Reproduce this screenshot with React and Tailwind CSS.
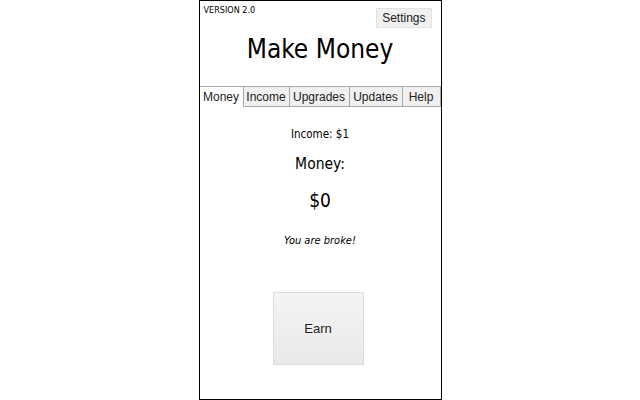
import React, { useState } from "react";

const tabs = [
  { label: "Money", w: "w-[44px]" },
  { label: "Income", w: "w-[46px]" },
  { label: "Upgrades", w: "w-[60px]" },
  { label: "Updates", w: "w-[53px]" },
  { label: "Help", w: "w-[38px]" },
];

function Tabs({ active, onPick }) {
  return (
    <div className="flex h-[21px] font-['Liberation_Sans',Arial,sans-serif] text-[12px] text-[#222]">
      {tabs.map((t) => (
        <button
          key={t.label}
          onClick={() => onPick(t.label)}
          className={
            active === t.label
              ? `${t.w} h-full border-t border-r border-[#a9a9a9] bg-white`
              : `${t.w} h-full border-t border-r border-b border-[#a9a9a9] bg-[#f0f0f0]`
          }
        >
          {t.label}
        </button>
      ))}
      <div className="flex-1 border-b border-[#a9a9a9]" />
    </div>
  );
}

export default function App() {
  const [tab, setTab] = useState("Money");
  const [money, setMoney] = useState(0);

  return (
    <div className="w-full h-[400px] bg-white">
      <div className="mx-auto w-[243px] h-[400px] border border-black flex flex-col font-['DejaVu_Sans_Condensed','DejaVu_Sans',Tahoma,sans-serif] text-black">
        {/* header */}
        <div className="h-[85px] flex flex-col">
          <div className="flex justify-between items-start">
            <div className="pl-[4px] pt-[4px] text-[9px] leading-[11px]">VERSION 2.0</div>
            <button className="mt-[7px] mr-[9px] h-[20px] px-[5px] bg-[#f0f0f0] border border-[#e3e3e3] font-['Liberation_Sans',Arial,sans-serif] text-[12px] text-[#222]">
              Settings
            </button>
          </div>
          <h1 className="text-center text-[26px] leading-[34px] mt-[4px]">Make Money</h1>
        </div>

        <Tabs active={tab} onPick={setTab} />

        {/* money panel */}
        <div className="flex flex-col items-center">
          <div className="mt-[19px] text-[11.5px] leading-[16px]">Income: $1</div>
          <div className="mt-[11px] text-[15.5px] leading-[22px]">Money:</div>
          <div className="mt-[12px] text-[19px] leading-[26px]">${money}</div>
          <div className="mt-[21px] text-[11px] leading-[14px] italic">
            {money === 0 ? "You are broke!" : "Keep earning!"}
          </div>
          <button
            onClick={() => setMoney(money + 1)}
            className="mt-[44px] mr-[4px] w-[91px] h-[73px] bg-gradient-to-b from-[#f4f4f4] to-[#e9e9e9] border border-[#dcdcdc] font-['Liberation_Sans',Arial,sans-serif] text-[13px] text-[#222]"
          >
            Earn
          </button>
        </div>
      </div>
    </div>
  );
}
